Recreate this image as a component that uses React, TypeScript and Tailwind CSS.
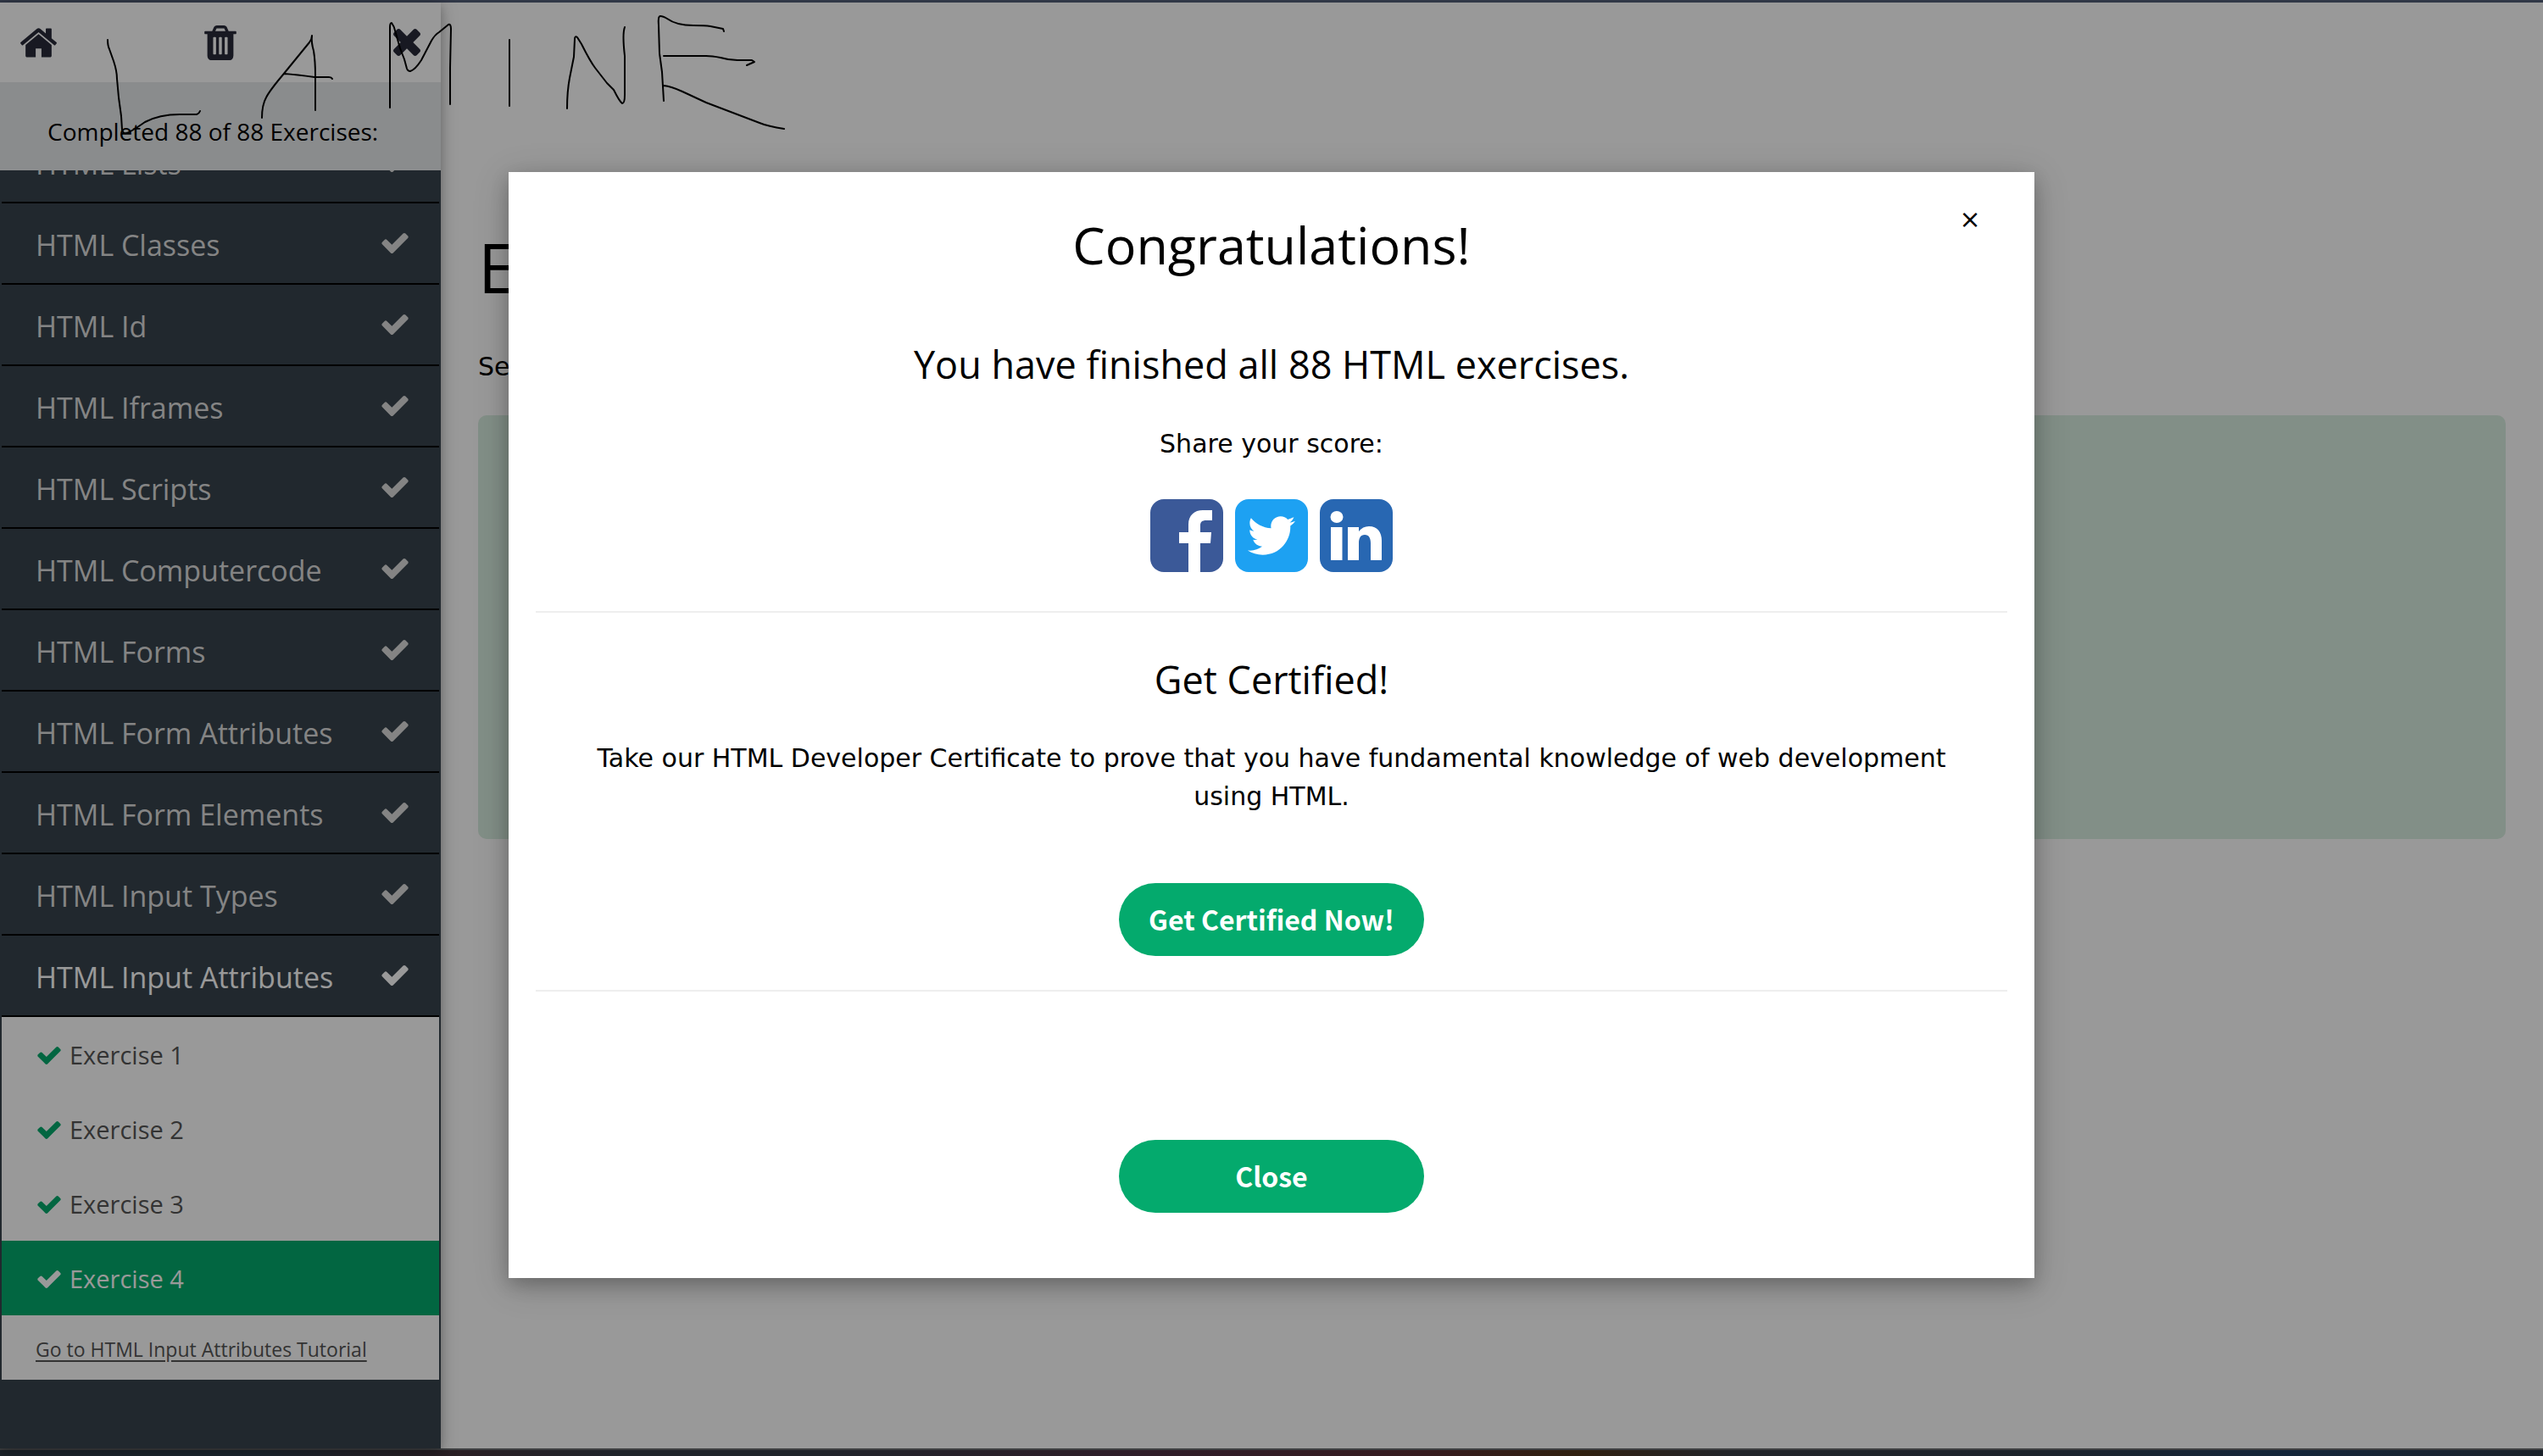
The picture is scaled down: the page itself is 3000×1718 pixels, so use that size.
import React from "react";
import { FaTwitter } from "react-icons/fa";

const lessons = [
  "HTML Classes",
  "HTML Id",
  "HTML Iframes",
  "HTML Scripts",
  "HTML Computercode",
  "HTML Forms",
  "HTML Form Attributes",
  "HTML Form Elements",
  "HTML Input Types",
];

const exercises = ["Exercise 1", "Exercise 2", "Exercise 3", "Exercise 4"];

function CheckIcon({ className }: { className: string }) {
  return (
    <svg viewBox="121 334 1550 1188" fill="currentColor" className={className} aria-hidden="true">
      <path d="M1671 566q0 40-28 68l-724 724-136 136q-28 28-68 28t-68-28l-136-136-362-362q-28-28-28-68t28-68l136-136q28-28 68-28t68 28l294 295 656-657q28-28 68-28t68 28l136 136q28 28 28 68z" />
    </svg>
  );
}

function HomeIcon() {
  return (
    <svg viewBox="89 256 1614 1280" fill="currentColor" className="h-[35px] w-[43px]" aria-hidden="true">
      <path d="M1472 992v480q0 26-19 45t-45 19h-384v-384h-256v384h-384q-26 0-45-19t-19-45v-480q0-1 .5-3t.5-3l575-474 575 474q1 2 1 6zm223-69l-62 74q-8 9-21 11h-3q-13 0-21-7l-692-577-692 577q-12 8-24 7-13-2-21-11l-62-74q-8-10-7-23.5t11-21.5l719-599q32-26 76-26t76 26l244 204v-195q0-14 9-23t23-9h192q14 0 23 9t9 23v408l219 182q10 8 11 21.5t-7 23.5z" />
    </svg>
  );
}

function TrashIcon() {
  return (
    <svg viewBox="192 128 1408 1536" fill="currentColor" className="h-[41px] w-[38px]" aria-hidden="true">
      <path d="M704 1376v-704q0-14-9-23t-23-9h-64q-14 0-23 9t-9 23v704q0 14 9 23t23 9h64q14 0 23-9t9-23zm256 0v-704q0-14-9-23t-23-9h-64q-14 0-23 9t-9 23v704q0 14 9 23t23 9h64q14 0 23-9t9-23zm256 0v-704q0-14-9-23t-23-9h-64q-14 0-23 9t-9 23v704q0 14 9 23t23 9h64q14 0 23-9t9-23zm-544-992h448l-48-117q-7-9-17-11h-317q-10 2-17 11zm928 32v64q0 14-9 23t-23 9h-96v948q0 83-47 143.5t-113 60.5h-832q-66 0-113-58.5t-47-141.5v-952h-96q-14 0-23-9t-9-23v-64q0-14 9-23t23-9h309l70-167q15-37 54-63t79-26h320q40 0 79 26t54 63l70 167h309q14 0 23 9t9 23z" />
    </svg>
  );
}

function TimesIcon() {
  return (
    <svg viewBox="302 366 1188 1188" fill="currentColor" className="size-8" aria-hidden="true">
      <path d="M1490 1322q0 40-28 68l-136 136q-28 28-68 28t-68-28l-294-294-294 294q-28 28-68 28t-68-28l-136-136q-28-28-28-68t28-68l294-294-294-294q-28-28-28-68t28-68l136-136q28-28 68-28t68 28l294 294 294-294q28-28 68-28t68 28l136 136q28 28 28 68t-28 68l-294 294 294 294q28 28 28 68z" />
    </svg>
  );
}

function Lesson({ title, active = false }: { title: string; active?: boolean }) {
  return (
    <a
      href="#"
      className={
        "flex h-24 shrink-0 items-center justify-between border-b-2 border-black pt-1 pr-9 pl-10 text-[34px] " +
        (active ? "text-white" : "text-[#dddddd]")
      }
    >
      <span>{title}</span>
      <CheckIcon className="mb-1 h-6 w-8" />
    </a>
  );
}

function Sidebar() {
  return (
    <aside className="z-10 flex w-[520px] shrink-0 flex-col bg-[#38444d] shadow-[0_4px_10px_rgba(0,0,0,0.16),0_4px_20px_rgba(0,0,0,0.24)]">
      <div className="grid h-[94px] grid-cols-3 items-center bg-white px-6 text-[#282a39]">
        <button type="button" aria-label="Home" className="justify-self-start">
          <HomeIcon />
        </button>
        <button type="button" aria-label="Reset score" className="justify-self-center">
          <TrashIcon />
        </button>
        <button type="button" aria-label="Close menu" className="justify-self-end">
          <TimesIcon />
        </button>
      </div>
      <p className="flex h-[104px] items-center bg-[#e7e9eb] pt-3 pl-14 text-[28px] text-black">
        Completed 88 of 88 Exercises:
      </p>
      <ul className="flex flex-col px-0.5">
        <li className="flex h-[39px] flex-col justify-end overflow-hidden">
          <Lesson title="HTML Lists" />
        </li>
        {lessons.map((title) => (
          <li key={title}>
            <Lesson title={title} />
          </li>
        ))}
        <li>
          <Lesson title="HTML Input Attributes" active />
          <ul className="bg-white text-[29px] text-[#555555]">
            {exercises.map((name, i) => (
              <li key={name}>
                <a
                  href="#"
                  className={
                    "flex h-[88px] items-center gap-[10px] pt-0.5 pl-[42px] " +
                    (i === 3 ? "bg-[#04aa6d] text-white" : "")
                  }
                >
                  <CheckIcon className={"h-[21px] w-7 " + (i === 3 ? "text-white" : "text-[#04aa6d]")} />
                  <span>{name}</span>
                </a>
              </li>
            ))}
            <li className="flex h-[76px] items-center pt-1 pl-10 text-[23px]">
              <a href="#" className="underline underline-offset-4">
                Go to HTML Input Attributes Tutorial
              </a>
            </li>
          </ul>
        </li>
      </ul>
    </aside>
  );
}

function Handwriting() {
  return (
    <svg
      viewBox="0 0 940 170"
      className="pointer-events-none absolute top-0 left-0 z-30 h-[170px] w-[940px]"
      fill="none"
      stroke="black"
      strokeWidth="2"
      strokeLinecap="round"
      strokeLinejoin="round"
      aria-hidden="true"
    >
      <path d="M127 47Q127 54 129 58L134 72Q138 84 138 93L140 115L143 137L144 153Q145 158 149 157Q154 156 171 144Q188 135 212 135H232Q235 134 236 131" />
      <path d="M309 139Q309 124 314 115Q318 107 334 88L365 50Q368 46 368 42Q367 50 370 60Q372 72 372 90V130M335 87Q350 88 371 91H388Q391 91 392 93" />
      <path d="M460 127V32Q460 27 462 27Q465 31 466 36L472 57L477 70L480 81Q481 84 484 84Q490 82 497 71L509 48Q513 41 518 38L529 29Q532 28 532 34L531 80V123" />
      <path d="M601 47V125" />
      <path d="M669 128Q669 108 672 92L677 67L678 46Q678 42 681 44L686 52Q696 72 702 80L716 98L724 106Q731 120 734 122Q737 122 737 112V66Q734 40 737 32" />
      <path d="M783 119L781 85L778 63L777 30Q776 19 779 19Q782 19 787 22Q798 30 818 30Q832 30 838 31L853 34L854 37M783 66H833Q840 66 850 68Q860 71 870 71L887 71L890 73L881 77M783 101Q792 102 805 108L833 121L896 145Q906 149 925 152" />
    </svg>
  );
}

function ShareLinks() {
  return (
    <div className="mt-[43px] flex gap-[14px]">
      <a href="#" aria-label="Share on Facebook">
        <svg viewBox="0 0 86 86" className="size-[86px]" aria-hidden="true">
          <rect width="86" height="86" rx="16" fill="#3b5998" />
          <path fill="white" d="M45 86V52H34V39H45V30C45 19 52 13 62 13H73V25H66C61 25 59 27 59 31V39H72L71 52H59V86Z" />
        </svg>
      </a>
      <a
        href="#"
        aria-label="Share on Twitter"
        className="flex size-[86px] items-center justify-center rounded-2xl bg-[#1da1f2] text-white"
      >
        <FaTwitter size={56} />
      </a>
      <a href="#" aria-label="Share on LinkedIn">
        <svg viewBox="0 0 86 86" className="size-[86px]" aria-hidden="true">
          <rect width="86" height="86" rx="16" fill="#2867b2" />
          <g fill="white">
            <ellipse cx="20" cy="21" rx="7.5" ry="7" />
            <path d="M13 33H26.500V72H13Z" />
            <path d="M33 33H46V38C49 34 53 32 58 32C68 32 73 39 73 49V72H60V52C60 46 58 42 53 42C48 42 46 46 46 52V72H33Z" />
          </g>
        </svg>
      </a>
    </div>
  );
}

const pill =
  "flex h-[86px] w-[360px] items-center justify-center rounded-full bg-[#04aa6d] pb-0.5 font-['Noto_Sans_CJK_SC',sans-serif] text-[32px] font-bold text-white";

function Modal() {
  return (
    <div
      role="dialog"
      aria-modal="true"
      aria-labelledby="dialog-title"
      className="relative mx-auto mt-[200px] flex w-3/5 flex-col items-center bg-white px-8 pt-[38px] pb-[77px] text-black shadow-[0_8px_20px_rgba(0,0,0,0.2),0_8px_40px_rgba(0,0,0,0.19)]"
    >
      <button
        type="button"
        aria-label="Close dialog"
        className="absolute top-8 right-[52px] flex size-12 items-center justify-center font-['DejaVu_Sans',sans-serif] text-[30px] leading-none"
      >
        ×
      </button>
      <h2 id="dialog-title" className="text-[61px] leading-[96px]">
        Congratulations!
      </h2>
      <h3 className="mt-[57px] text-[45px] leading-[72px]">You have finished all 88 HTML exercises.</h3>
      <p className="mt-[35px] font-['DejaVu_Sans',sans-serif] text-[30px] leading-[45px]">Share your score:</p>
      <ShareLinks />
      <hr className="mt-[46px] w-full border-t-2 border-[#eeeeee]" />
      <h3 className="mt-[43px] text-[45px] leading-[72px]">Get Certified!</h3>
      <p className="mt-[34px] px-8 text-center font-['DejaVu_Sans',sans-serif] text-[30px] leading-[45px]">
        Take our HTML Developer Certificate to prove that you have fundamental knowledge of web development using HTML.
      </p>
      <a href="#" className={pill + " mt-20"}>
        Get Certified Now!
      </a>
      <hr className="mt-10 w-full border-t-2 border-[#eeeeee]" />
      <button type="button" className={pill + " mt-[175px]"}>
        Close
      </button>
    </div>
  );
}

export default function App() {
  return (
    <div className="flex min-h-screen flex-col bg-white font-['Open_Sans',sans-serif]">
      <div className="h-[3px] bg-[#313847]" />
      <div className="relative flex flex-1">
        <Sidebar />
        <main className="flex-1 px-11 text-black">
          <h1 className="mt-[252px] text-[80px] leading-[120px]">Exercise</h1>
          <p className="mt-[35px] font-['DejaVu_Sans',sans-serif] text-[30px] leading-[45px]">Select</p>
          <section className="mt-[35px] h-[500px] rounded-[10px] bg-[#d9eee1]" />
        </main>
        <div className="absolute inset-0 z-20 bg-black/40">
          <Modal />
        </div>
      </div>
      <div className="h-[9px] border-t-2 border-[#3f4042] bg-[linear-gradient(to_right,#1d252c_0%,#1c2730_10%,#2a1f24_18%,#20242a_24%,#20242a_32%,#2f1d29_45%,#361b1f_56%,#30200f_62%,#22252a_68%,#1c232b_80%,#14263a_90%,#1b222a_100%)]" />
      <Handwriting />
    </div>
  );
}
